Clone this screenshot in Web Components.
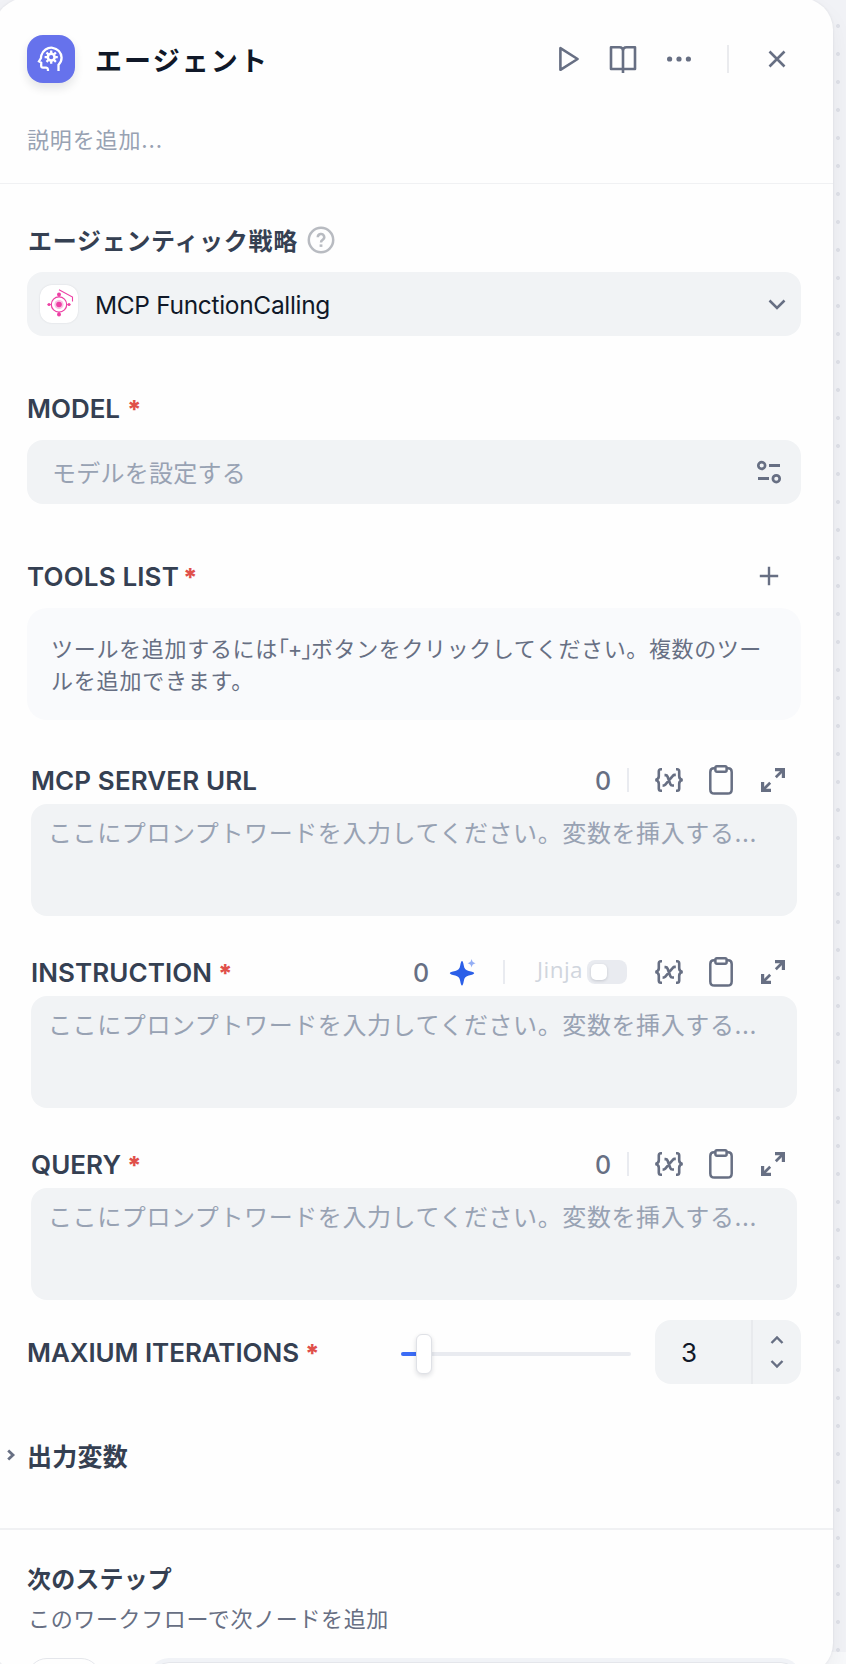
<!DOCTYPE html>
<html lang="ja">
<head>
<meta charset="utf-8">
<title>エージェント</title>
<style>
html, body { margin: 0; height: 1664px; overflow: hidden; }
body { font-family: Inter, "Noto Sans CJK JP", sans-serif; background: #f1f2f6; }
</style>
</head>
<body>
<node-canvas>
  <agent-panel></agent-panel>
</node-canvas>
<script>
const define = (name, html, setup) => customElements.define(name, class extends HTMLElement {
  connectedCallback() {
    if (this.shadowRoot) return;
    const root = this.attachShadow({ mode: 'open' });
    const t = document.createElement('template');
    t.innerHTML = html;
    root.append(t.content.cloneNode(true));
    if (setup) setup(this, root);
  }
});

const stroke = (size, w, body) => `<svg width="${size[0]}" height="${size[1]}" viewBox="0 0 ${size[0]} ${size[1]}" fill="none" stroke="currentColor" stroke-width="${w}">${body}</svg>`;
const ICONS = {
  agent: stroke([28, 28], 2.3, `<path d="M21.500 26V19.800Q24.600 17 24.600 12.600A10.300 10.300 0 0 0 4.400 10.200Q4 11.400 4 13L2 16.400 4.200 17.600V21Q4.300 22.700 6 22.700H9.200Q10.700 22.800 10.900 24.200L11 26"/><circle cx="14.200" cy="12.200" r="3.400" stroke-width="2.600"/><path d="M14.200 5.600v2.600M14.200 16.200v2.600M7.600 12.200h2.600M18.200 12.200h2.600M9.500 7.500l1.900 1.900M17 15l1.900 1.900M9.500 16.900l1.900-1.900M17 9.400l1.900-1.900" stroke-width="2.300"/>`),
  play: stroke([24, 28], 2.6, `<path d="M3.400 3.200v21.600L20.600 14z" stroke-linejoin="round"/>`),
  book: stroke([28, 30], 2.6, `<path d="M2 3.200H10.500Q14 3.200 14 6.800 14 3.200 17.500 3.200H26V25H2zM14 6v23" stroke-linejoin="round"/>`),
  more: `<svg width="26" height="8" viewBox="0 0 26 8" fill="currentColor"><circle cx="3.600" cy="4" r="2.600"/><circle cx="13" cy="4" r="2.600"/><circle cx="22.400" cy="4" r="2.600"/></svg>`,
  close: stroke([18, 18], 2.6, `<path d="M1.500 1.500l15 15M16.500 1.500l-15 15"/>`),
  help: stroke([28, 28], 2.5, `<circle cx="14" cy="14" r="12.200"/><path d="M10.800 11.200A3.200 3.200 0 1 1 15.600 13.900Q14 14.800 14 16.600"/><path d="M14 18.400v2.500" stroke-width="2.800"/>`),
  down: stroke([18, 12], 2.5, `<path d="M1.500 1.500L9 9l7.500-7.500"/>`),
  tune: stroke([26, 26], 2.7, `<circle cx="5.700" cy="6.500" r="3.400"/><path d="M13 6.500h11M2 19.500h11" stroke-width="2.900"/><circle cx="20.300" cy="19.700" r="3.400"/>`),
  plus: stroke([20, 20], 2.4, `<path d="M10 .8v18.400M.8 10h18.400"/>`),
  variable: stroke([30, 26], 2.6, `<path d="M8 2.200H6.900Q4.800 2.200 4.800 4.500v4.800Q4.800 12.400 1.400 13 4.800 13.600 4.800 16.700V21.500Q4.800 23.800 6.900 23.800H8M22 2.200h1.100Q25.200 2.200 25.200 4.500v4.800Q25.200 12.400 28.600 13 25.200 13.600 25.200 16.700V21.500Q25.200 23.800 23.100 23.800H22"/><path d="M10.500 8.100H11.500Q13 8.100 13.500 9.500L16.300 17Q16.800 18.500 18.300 18.500H20M21.800 7.900H20.800Q19.600 7.900 18.800 8.900L11.300 17.600Q10.500 18.600 8.600 18.600"/>`),
  clipboard: stroke([26, 32], 2.5, `<path d="M7 4.300H6Q2.300 4.300 2.300 8V25.400Q2.300 29.500 6.400 29.500H19.600Q23.700 29.500 23.700 25.400V8Q23.700 4.300 20 4.300H19"/><rect x="7.400" y="2.200" width="11.200" height="5.600" rx="1.500"/>`),
  expand: stroke([26, 26], 2.7, `<path d="M15.800 10.200l7-7M10.200 15.800l-7 7"/><path d="M15 2.600h8.400v8.400M2.600 15v8.400H11" stroke-width="3.200"/>`),
  sparkle: `<svg width="28" height="28" viewBox="0 0 28 28"><path d="M13 3C13.800 3 14.200 4.500 14.800 7.500 15.300 10.800 16.900 12.300 19.800 13 23 13.800 25.200 14.300 25.200 15.200S23 16.600 19.800 17.400C16.900 18.100 15.300 19.600 14.800 22.900 14.200 25.800 13.800 27.400 13 27.400S11.800 25.800 11.200 22.900C10.700 19.600 9.100 18.100 6.200 17.400 3 16.600.8 16.100.8 15.200S3 13.800 6.200 13C9.100 12.300 10.700 10.800 11.200 7.500 11.800 4.500 12.200 3 13 3z" fill="#2b5fe8"/><path d="M22.600 1C23.500 4 23.800 4.300 26.800 5.200 23.800 6.100 23.500 6.500 22.600 9.500 21.700 6.500 21.400 6.100 18.400 5.200 21.400 4.300 21.700 4 22.600 1z" fill="#93aef5"/></svg>`,
  up: stroke([14, 10], 2.4, `<path d="M1.500 8L7 2.500 12.500 8"/>`),
  dn: stroke([14, 10], 2.4, `<path d="M1.500 2L7 7.500 12.500 2"/>`),
  right: stroke([10, 14], 2.8, `<path d="M2.200 2.400L7 7 2.200 11.600"/>`),
  strategy: `<svg width="30" height="30" viewBox="0 0 30 30" fill="none" stroke="#ed3fa4"><circle cx="15" cy="15.500" r="7.700" stroke-width="1.200"/><circle cx="15" cy="15.500" r="4.600" fill="#f9c1e2" stroke="none"/><g fill="#ed3fa4" stroke="none"><circle cx="15" cy="15.500" r="2.800"/><circle cx="15" cy="5.500" r="2"/><circle cx="15" cy="25.500" r="2"/><circle cx="5" cy="15.500" r="1.500"/><circle cx="25" cy="15.500" r="1.500"/></g><path d="M15 .8L28.500 8v4.600" stroke-width="1.100"/><path d="M3.500 15.500h4M22.500 15.500h4M15 6v2M15 23v2" stroke-width=".8"/></svg>`
};

define('ui-icon', `<style>:host{display:inline-flex;flex:none}svg{display:block;overflow:visible}</style><span></span>`,
  (el, root) => { root.querySelector('span').innerHTML = ICONS[el.getAttribute('name')]; });

/* A single line of text tracked to span the given measure. */
define('tracked-text', `<style>:host{display:inline-block;white-space:nowrap;flex:none}</style><slot></slot>`,
  (el) => {
    const target = +el.getAttribute('measure');
    const n = Array.from(el.textContent).length;
    const natural = el.getBoundingClientRect().width;
    el.style.letterSpacing = ((target - natural) / n).toFixed(3) + 'px';
  });

define('field-label', `<style>
  :host{display:flex;align-items:center;font-size:26px;font-weight:600;line-height:32px;color:#354052;flex:none}
  b{color:#e0504a;font-size:25px;font-weight:800;margin-left:var(--star-gap,7px);display:none}
  :host([required]) b{display:block}
</style><slot></slot><b>*</b>`);

define('field-box', `<style>
  :host{display:flex;align-items:center;height:64px;box-sizing:border-box;border-radius:16px;background:#f1f3f5;color:#98a2b3;font-size:24px}
</style><slot></slot>`);

define('prompt-editor', `<style>
  :host{display:block;height:152px;margin:0 4px 40px}
  .head{height:40px;display:flex;align-items:flex-start;justify-content:space-between;padding:0 11px 0 0;box-sizing:border-box;color:#676f83}
  .head field-label{margin-top:1px}
  .tools{display:flex;align-items:center;height:32px}
  .num{font-size:25px;font-weight:500;width:16px;text-align:center;padding-top:1px}
  .bar{width:2px;height:24px;background:#e9ebf0}
  .group{display:flex;align-items:center}
  .jinja{margin-right:2px}
  .name{font:22.500px/28px "Open Sans",sans-serif;color:#d0d5dd;margin-top:-5px}
  .switch{width:40px;height:24px;border-radius:8px;background:#e9ebf0;display:flex;align-items:center;padding-left:4px;box-sizing:border-box;margin-left:4px}
  .switch i{width:16px;height:16px;border-radius:5px;background:#fff;box-shadow:0 1px 3px #1018282b}
  .body{height:112px;box-sizing:border-box;border-radius:16px;background:#f1f3f5;padding:12px 17px;font-size:24px;line-height:36px;color:#98a2b3;overflow:hidden}
</style>
<div class="head"><field-label id="l"><slot></slot></field-label>
 <div class="tools">
  <div class="group jinja"><span class="num" style="margin-right:20px">0</span><ui-icon name="sparkle"></ui-icon><span class="bar" style="margin:0 32px 0 26px"></span><tracked-text class="name" measure="46">Jinja</tracked-text><span class="switch"><i></i></span></div>
  <div class="group plain"><span class="num">0</span><span class="bar" style="margin-left:16px"></span></div>
  <ui-icon name="variable" style="margin-left:25px"></ui-icon><ui-icon name="clipboard" style="margin-left:24px"></ui-icon><ui-icon name="expand" style="margin-left:26px"></ui-icon>
 </div></div>
<div class="body"><tracked-text measure="709">ここにプロンプトワードを入力してください。変数を挿入する...</tracked-text></div>`,
  (el, root) => {
    if (el.hasAttribute('required')) root.querySelector('#l').setAttribute('required', '');
    root.querySelector(el.hasAttribute('jinja') ? '.plain' : '.jinja').remove();
  });

define('range-slider', `<style>
  :host{display:block;width:230px;height:40px;position:relative}
  .track{height:4px;border-radius:2px;background:#e9ebf0;margin-top:20px}
  .fill{height:4px;width:24px;border-radius:2px;background:#3b6cf6}
  .thumb{position:absolute;left:15px;top:2px;width:16px;height:40px;box-sizing:border-box;border:1px solid #dfe1e6;border-radius:6px;background:#fff;box-shadow:0 2px 5px #10182824}
</style><div class="track"><div class="fill"></div></div><div class="thumb"></div>`);

define('number-stepper', `<style>
  :host{display:flex;width:146px;height:64px;border-radius:16px;background:#f1f3f5;overflow:hidden}
  .v{width:96px;box-sizing:border-box;padding:1px 0 0 26px;font-size:26px;line-height:64px;color:#101828}
  .b{flex:1;border-left:2px solid #e8eaed;display:flex;flex-direction:column;align-items:center;justify-content:center;gap:14px;color:#676f83}
</style><div class="v">3</div><div class="b"><ui-icon name="up"></ui-icon><ui-icon name="dn"></ui-icon></div>`);

define('panel-header', `<style>
  :host{display:block;height:183px;box-sizing:content-box;border-bottom:1px solid #f0f1f3}
  .row{display:flex;align-items:center;height:48px;padding:35px 47px 0 27px}
  .tile{width:48px;height:48px;border-radius:16px;background:#6672ec;color:#fff;display:flex;align-items:center;justify-content:center;box-shadow:0 5px 10px #1018281c}
  .title{font-size:27px;font-weight:700;line-height:40px;color:#101828;margin:5px 0 0 20px;flex:none}
  .actions{margin-left:auto;display:flex;align-items:center;color:#676f83}
  .bar{width:2px;height:28px;background:#eaebee;margin:0 39px 0 35px}
  .desc{font-size:22px;line-height:32px;color:#98a2b3;padding:41px 0 0 27px}
</style>
<div class="row"><div class="tile"><ui-icon name="agent"></ui-icon></div><tracked-text class="title" measure="174">エージェント</tracked-text>
<div class="actions"><ui-icon name="play" style="margin-right:28px"></ui-icon><ui-icon name="book" style="margin-right:29px"></ui-icon><ui-icon name="more"></ui-icon><span class="bar"></span><ui-icon name="close"></ui-icon></div></div>
<div class="desc"><tracked-text measure="136">説明を追加...</tracked-text></div>`);

define('agent-panel', `<style>
  :host{display:block;width:839px;height:1677px;margin:-2px 0 0 -6px;box-sizing:border-box;padding:2px 0 0 6px;border-radius:32px;background:#fefefe;overflow:hidden;box-shadow:0 0 3px #10182814,0 12px 24px #1018280d}
  .form{padding:0 32px 0 27px}
  .lab{display:flex;justify-content:space-between;align-items:center;height:32px;margin-bottom:15px}
  .hint{height:112px;box-sizing:border-box;border-radius:20px;background:#f9fafc;padding:25px 24px;font-size:22px;line-height:32px;color:#676f83}
  .hint div{height:32px;display:flex}
  .half{font-feature-settings:"halt"}
  .s{width:38px;height:38px;border-radius:12px;background:#fff;box-shadow:0 0 2px #1018281f;display:flex;align-items:center;justify-content:center;margin:0 17px 0 13px}
  .it{display:flex;align-items:center;height:64px;margin-top:-20px}
  .out{display:flex;align-items:center;height:36px;margin:53px 0 55px;padding-left:6px;color:#676f83}
  .next{border-top:2px solid #f0f1f3;padding:32px 32px 0 27px}
  .h{font-size:24px;font-weight:700;line-height:36px;color:#354052;height:36px}
  .d{font-size:22px;line-height:32px;color:#676f83;height:32px;margin:5px 0 23px}
  .cards{display:flex;gap:48px}
  .c1{width:74px;height:72px;box-sizing:border-box;border:1.500px solid #e4e6eb;border-radius:20px}
  .c2{flex:1;height:72px;box-sizing:border-box;border-radius:20px;background:#f1f3f7;padding:4px}
  .c2 div{height:64px;border-radius:16px;background:#fff;border:1px solid #e4e6eb;box-sizing:border-box}
</style>
<panel-header></panel-header>
<div class="form">
  <div class="lab" style="padding-top:41px"><field-label style="font-size:24px;font-weight:700"><tracked-text measure="270" style="margin:2px 0 0 1px">エージェンティック戦略</tracked-text><ui-icon name="help" style="color:#b8bbc1;margin-left:9px;margin-top:-2px"></ui-icon></field-label></div>
  <field-box><span class="s"><ui-icon name="strategy"></ui-icon></span><tracked-text measure="235" style="font-size:24.500px;color:#101828;margin-top:1px">MCP FunctionCalling</tracked-text><ui-icon name="down" style="margin:2px 15px 0 auto;color:#676f83"></ui-icon></field-box>
  <div class="lab" style="padding-top:57px"><field-label required><tracked-text measure="93">MODEL</tracked-text></field-label></div>
  <field-box><tracked-text measure="194" style="margin:-1px 0 0 25px">モデルを設定する</tracked-text><ui-icon name="tune" style="margin:0 19px 0 auto;color:#676f83"></ui-icon></field-box>
  <div class="lab" style="padding-top:57px"><field-label required style="--star-gap:4px"><tracked-text measure="152">TOOLS LIST</tracked-text></field-label><ui-icon name="plus" style="margin:-2px 22px 0 0;color:#676f83"></ui-icon></div>
  <div class="hint"><div><tracked-text measure="227">ツールを追加するには</tracked-text><tracked-text measure="33" class="half">「+」</tracked-text><tracked-text measure="451">ボタンをクリックしてください。複数のツー</tracked-text></div><div><tracked-text measure="203">ルを追加できます。</tracked-text></div></div>
  <div style="height:44px"></div>
  <prompt-editor><tracked-text measure="226">MCP SERVER URL</tracked-text></prompt-editor>
  <prompt-editor jinja required style="--star-gap:6px"><tracked-text measure="181">INSTRUCTION</tracked-text></prompt-editor>
  <prompt-editor required style="--star-gap:6px"><tracked-text measure="90">QUERY</tracked-text></prompt-editor>
  <div class="it"><field-label required style="margin-top:2px;--star-gap:6px"><tracked-text measure="272">MAXIUM ITERATIONS</tracked-text></field-label><range-slider style="margin:0 24px 0 auto"></range-slider><number-stepper></number-stepper></div>
</div>
<div class="out"><ui-icon name="right"></ui-icon><tracked-text measure="101" style="font-size:25px;font-weight:700;color:#354052;margin-left:11px">出力変数</tracked-text></div>
<div class="next"><div class="h"><tracked-text measure="145">次のステップ</tracked-text></div><div class="d"><tracked-text measure="361" style="margin-left:1px">このワークフローで次ノードを追加</tracked-text></div>
<div class="cards"><div class="c1"></div><div class="c2"><div></div></div></div></div>`);

define('node-canvas', `<style>
  :host{display:flow-root;width:846px;height:1664px;overflow:hidden;background:linear-gradient(#f8f9fb,#f8f9fb) 0 1652px/100% 12px no-repeat,radial-gradient(circle at 6px 14px,#dfe1e8 1.700px,transparent 2.300px) 832px 12px/28px 28px,#f1f2f6}
</style><slot></slot>`);
</script>
</body>
</html>
